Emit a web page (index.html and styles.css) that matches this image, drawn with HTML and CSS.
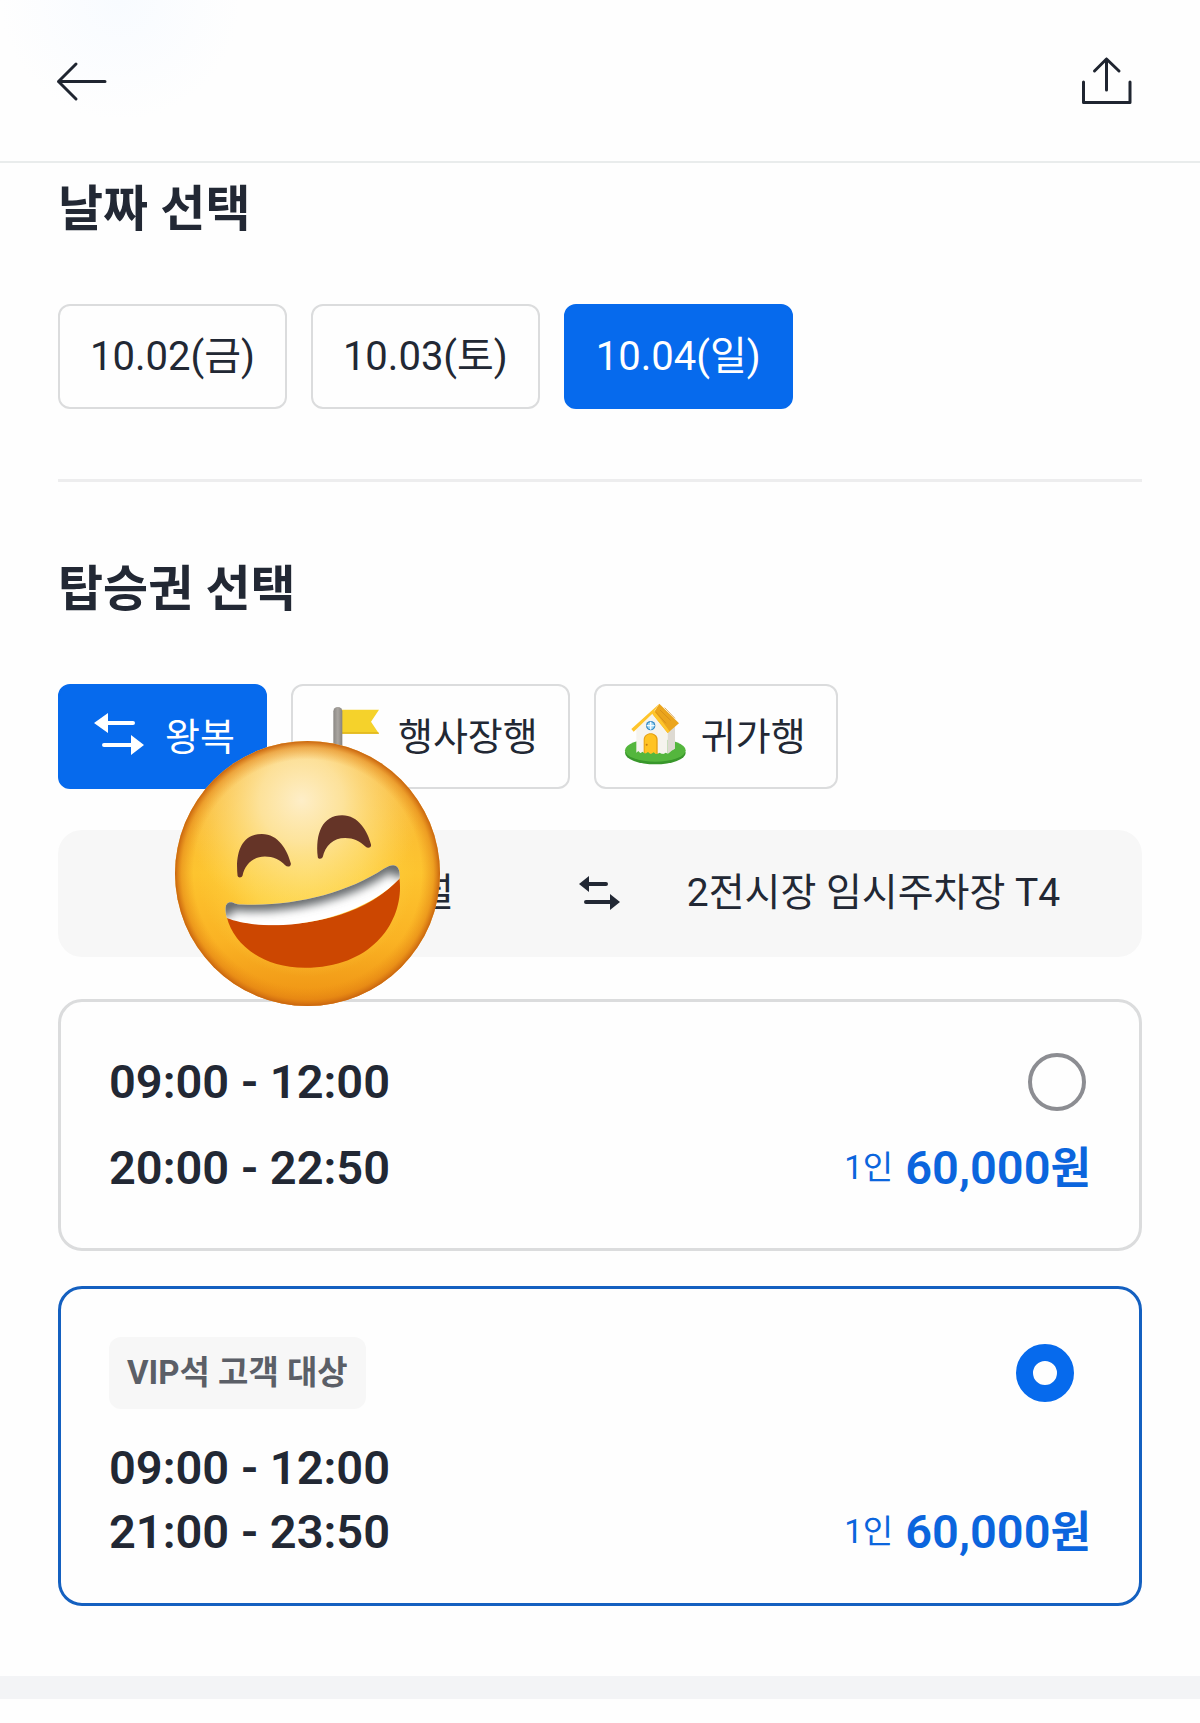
FILE: index.html
```
<!DOCTYPE html>
<html lang="ko">
<head>
	<meta charset="utf-8">
	<meta name="viewport" content="width=device-width, initial-scale=1">
	<title>탑승권 선택</title>
	<link rel="stylesheet" href="styles.css">
</head>
<body>
	<header class="header">
		<button class="icon-button" type="button" aria-label="뒤로">
			<svg class="header-icon" viewBox="0 0 52 52">
				<path d="M50 26.500H3.500M21 9L3.500 26.500L21 44"/>
			</svg>
		</button>
		<button class="icon-button" type="button" aria-label="공유">
			<svg class="header-icon" viewBox="0 0 52 52">
				<path d="M2.500 27V47.500H49V27M25.500 35V4M13.500 16L25.500 4L38 16"/>
			</svg>
		</button>
	</header>

	<main>
		<section class="section">
			<h2 class="title">날짜 선택</h2>
			<div class="chips">
				<button class="chip" type="button">10.02(금)</button>
				<button class="chip" type="button">10.03(토)</button>
				<button class="chip selected" type="button">10.04(일)</button>
			</div>
		</section>

		<section class="section ticket">
			<h2 class="title">탑승권 선택</h2>
			<div class="chips">
				<button class="chip chip-trip selected" type="button">
					<svg class="chip-icon" viewBox="0 0 60 60">
						<path d="M17 16H43M14 38H42" fill="none" stroke="#fff" stroke-width="4" stroke-linecap="round"/>
						<path d="M4 16L18 6V26ZM54 38L41 28V48Z" fill="#fff"/>
					</svg>
					<span>왕복</span>
				</button>
				<button class="chip chip-trip" type="button">
					<svg class="chip-icon" viewBox="4 8 180 180">
						<defs>
							<linearGradient id="pole">
								<stop offset="0" stop-color="#8b8884"/>
								<stop offset=".5" stop-color="#aaa6a1"/>
								<stop offset="1" stop-color="#85827e"/>
							</linearGradient>
						</defs>
						<path d="M58 23H172L148 59L172 95H58Z" transform="translate(0 -7)" fill="#f5d22b"/>
						<path d="M58 84H170L172 88H58Z" fill="#dfb51d"/>
						<rect x="35" y="8" width="27" height="180" rx="13" fill="url(#pole)"/>
					</svg>
					<span>행사장행</span>
				</button>
				<button class="chip chip-trip" type="button">
					<svg class="chip-icon" viewBox="137 109 180 180" overflow="visible">
						<ellipse cx="225" cy="246" rx="91" ry="35" fill="#38972b"/>
						<ellipse cx="225" cy="239" rx="91" ry="34" fill="#54b63d"/>
						<path d="M168 165L214 120L262 176V250L168 246Z" fill="#f6f4ee"/>
						<path d="M262 170L284 154V234L262 250Z" fill="#dedad2"/>
						<path d="M237 99L296 158L262 187L217 131Z" fill="#eba51d"/>
						<path d="M237 99L153 175L160 183L216 129L262 187L268 182L222 121Z" fill="#ffc52b"/>
						<path d="M239 118L271 149M253 111L284 143M226 124L257 158" fill="none" stroke="#cf8718" stroke-width="2"/>
						<circle cx="211" cy="165" r="14" fill="#2e85c5"/>
						<circle cx="211" cy="165" r="10" fill="#9dd6f3"/>
						<path d="M211 153V177M199 165H223" stroke="#f5fbff" stroke-width="4"/>
						<path d="M190 248V207C190 181 232 181 232 207V250Z" fill="#e4a012"/>
						<path d="M193 248V208C193 185 228 185 228 208V250Z" fill="#ffc323"/>
						<circle cx="199" cy="222" r="3" fill="#c57b10"/>
						<path d="M168 246L174 241L180 248L187 243L194 250L203 244L211 251L220 245L229 252L238 246L247 252L256 246L264 250L274 240L284 236V243L262 256H180Z" fill="#54b63d"/>
					</svg>
					<span>귀가행</span>
				</button>
			</div>

			<div class="route">
				<span class="route-from">터미널</span>
				<svg class="route-icon" viewBox="0 0 42 36">
					<path d="M9 8H27M7 26H34" fill="none" stroke="#222834" stroke-width="4" stroke-linecap="round"/>
					<path d="M0 8L10 0V16ZM41 26L31 18V34Z" fill="#222834"/>
				</svg>
				<span class="route-to">2전시장 임시주차장 T4</span>
			</div>

			<div class="cards">
				<label class="card">
					<span class="row">
						<span class="time">09:00 - 12:00</span>
						<input class="radio" type="radio" name="ticket">
					</span>
					<span class="row">
						<span class="time">20:00 - 22:50</span>
						<span class="price"><small>1인</small> <b>60,000<span class="won">원</span></b></span>
					</span>
				</label>
				<label class="card card-vip">
					<span class="row">
						<span class="badge">VIP석 고객 대상</span>
						<input class="radio" type="radio" name="ticket" checked>
					</span>
					<span class="row">
						<span class="time">09:00 - 12:00</span>
					</span>
					<span class="row">
						<span class="time">21:00 - 23:50</span>
						<span class="price"><small>1인</small> <b>60,000<span class="won">원</span></b></span>
					</span>
				</label>
			</div>

			<svg class="sticker" viewBox="45 62 796 796" aria-hidden="true">
				<defs>
					<linearGradient id="face" x1="0" y1="0" x2="0" y2="1">
						<stop offset="0" stop-color="#f6b13c"/>
						<stop offset=".5" stop-color="#fdc42f"/>
						<stop offset=".75" stop-color="#fab324"/>
						<stop offset="1" stop-color="#ee9012"/>
					</linearGradient>
					<radialGradient id="glow" gradientUnits="userSpaceOnUse" cx="440" cy="440" r="330">
						<stop offset="0" stop-color="#ffe05a"/>
						<stop offset=".5" stop-color="#ffd84b" stop-opacity=".8"/>
						<stop offset="1" stop-color="#ffd040" stop-opacity="0"/>
					</radialGradient>
					<radialGradient id="shine" gradientUnits="userSpaceOnUse" cx="425" cy="240" r="360">
						<stop offset="0" stop-color="#feeec8"/>
						<stop offset=".35" stop-color="#fde5a4" stop-opacity=".9"/>
						<stop offset=".7" stop-color="#fddb7c" stop-opacity=".5"/>
						<stop offset="1" stop-color="#fdd560" stop-opacity="0"/>
					</radialGradient>
					<radialGradient id="rim" gradientUnits="userSpaceOnUse" cx="443" cy="460" r="398">
						<stop offset=".86" stop-color="#e88a14" stop-opacity="0"/>
						<stop offset=".95" stop-color="#df7c12" stop-opacity=".5"/>
						<stop offset="1" stop-color="#c8640f"/>
					</radialGradient>
					<clipPath id="teeth">
						<path d="M201 594C192 565 196 546 212 546C222 546 225 553 245 553C400 560 560 520 672 446C690 434 710 428 717 448Q722 462 719 476C640 560 500 608 370 615C300 618 240 610 201 594Z"/>
					</clipPath>
					<filter id="soft" x="-20%" y="-50%" width="140%" height="200%">
						<feGaussianBlur stdDeviation="15"/>
					</filter>
				</defs>
				<circle cx="443" cy="460" r="398" fill="url(#face)"/>
				<circle cx="443" cy="460" r="398" fill="url(#glow)"/>
				<circle cx="443" cy="460" r="398" fill="url(#shine)"/>
				<circle cx="443" cy="460" r="398" fill="url(#rim)"/>
				<g fill="#653427">
					<path id="eye" d="M233 467C225 395 247 341 306 341C355 341 383 389 393 430C394 439 383 442 376 435C360 418 340 409 315 409C280 409 255 432 248 466C246 473 235 474 233 467Z"/>
					<use href="#eye" x="241" y="-56"/>
				</g>
				<path d="M201 592C300 630 580 630 719 474C735 590 650 743 435 743C305 743 220 670 201 592Z" fill="#cc4701"/>
				<g clip-path="url(#teeth)">
					<path d="M180 420H740V640H180Z" fill="#fff"/>
					<path d="M192 590C190 540 215 546 245 550C400 556 560 516 672 442C705 422 722 430 724 470" fill="none" stroke="#64686a" stroke-width="46" filter="url(#soft)"/>
				</g>
			</svg>
		</section>
	</main>
	<div class="band"></div>
</body>
</html>
```
FILE: styles.css
```
* {
	box-sizing: border-box;
}
body {
	margin: 0;
	background: #fefefe;
	color: #222834;
	font-family: Roboto, "Noto Sans CJK KR", sans-serif;
}
button {
	font: inherit;
	color: inherit;
	cursor: pointer;
}

/* header */
.header {
	display: flex;
	justify-content: space-between;
	align-items: center;
	height: 163px;
	padding: 0 67px 0 55px;
	border-bottom: 2px solid #e9ecec;
	background: radial-gradient(circle at 120px 0, #f8fbff, #fefefe 120px);
}
.icon-button {
	padding: 0;
	border: none;
	background: none;
}
.header-icon {
	display: block;
	width: 52px;
	height: 52px;
	fill: none;
	stroke: #1f2530;
	stroke-width: 3;
	stroke-linecap: round;
	stroke-linejoin: round;
}

/* sections */
.section {
	margin: 0 58px;
	padding: 15px 0 70px;
}
.ticket {
	position: relative;
	padding-top: 76px;
	border-top: 3px solid #ededee;
}
.title {
	margin: 0 0 62px;
	font-size: 49px;
	line-height: 64px;
	font-weight: 700;
}
.chips {
	display: flex;
	flex-wrap: wrap;
	gap: 24px;
}
.chip {
	display: flex;
	align-items: center;
	height: 105px;
	padding: 0 30px;
	border: 2px solid #dbdcdd;
	border-radius: 12px;
	background: #fefefe;
	font-size: 40px;
	line-height: 56px;
}
.chip-trip {
	gap: 15px;
	font-size: 38px;
}
.chip.selected {
	border-color: #066aed;
	background: #066aed;
	color: #fff;
}
.chip-icon {
	width: 60px;
	height: 60px;
}

/* route */
.route {
	display: grid;
	grid-template-columns: 1fr 42px 1fr;
	align-items: center;
	margin: 41px 0 42px;
	padding: 36px 40px;
	border-radius: 24px;
	background: #f7f7f7;
	font-size: 39px;
	line-height: 55px;
}
.route-icon {
	width: 42px;
	height: 36px;
}
.route-from {
	padding-right: 125px;
	text-align: right;
}
.route-to {
	padding-left: 24px;
	text-align: center;
}

/* tickets */
.cards {
	display: grid;
	gap: 35px;
}
.card {
	display: flex;
	flex-direction: column;
	gap: 22px;
	padding: 48px;
	border: 3px solid #dbdcdd;
	border-radius: 24px;
	cursor: pointer;
}
.card-vip {
	gap: 0;
	padding-bottom: 39px;
	border-color: #1460c0;
}
.row {
	display: flex;
	justify-content: space-between;
	align-items: center;
}
.time,
.price {
	font-size: 47px;
	line-height: 64px;
	font-weight: 600;
}
.price {
	display: flex;
	align-items: center;
	gap: 12px;
	color: #0b65dd;
}
.price small {
	font-size: 33px;
	font-weight: 400;
}
.price b {
	font-weight: 600;
}
.won {
	font-size: 44px;
	line-height: 1;
}
.badge {
	margin-bottom: 27px;
	padding: 0 18px;
	border-radius: 12px;
	background: #f7f7f7;
	color: #5b5f67;
	font-size: 33px;
	line-height: 72px;
	font-weight: 700;
}
.radio {
	appearance: none;
	width: 58px;
	height: 58px;
	margin: 0 5px 0 0;
	border: 4px solid #8c8d92;
	border-radius: 50%;
}
.radio:checked {
	border: 17px solid #066aed;
}
.card-vip .radio {
	margin: 0 17px 27px 0;
}

.sticker {
	position: absolute;
	top: 259px;
	left: 117px;
	width: 265px;
	height: 265px;
}
.band {
	height: 23px;
	background: #f3f4f6;
}
```
